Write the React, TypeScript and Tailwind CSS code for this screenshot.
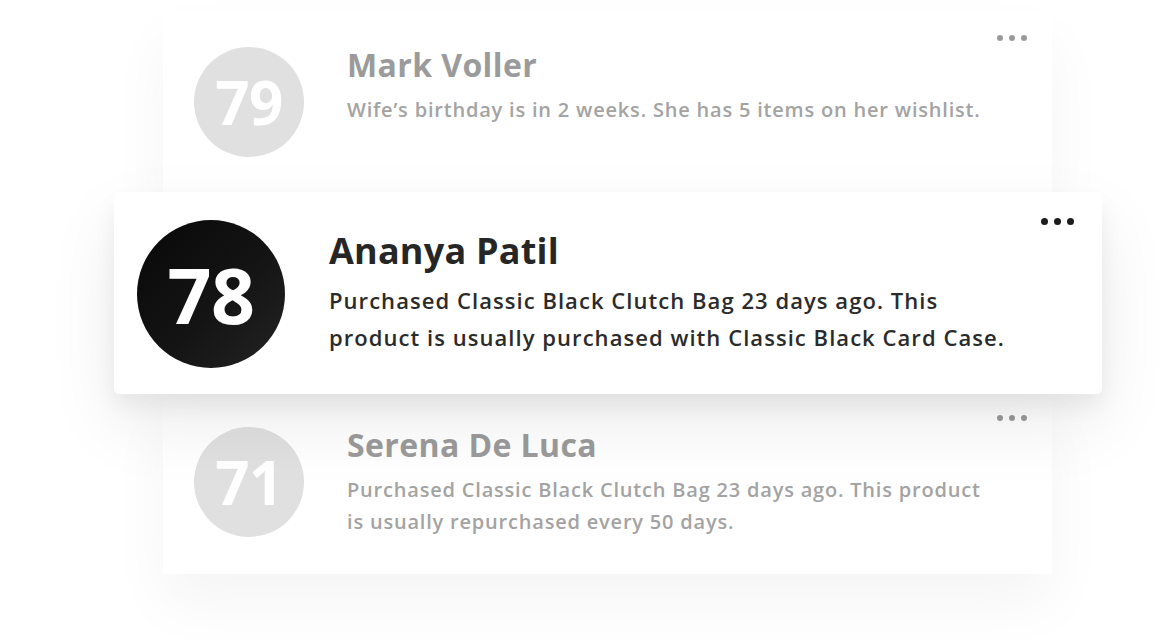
import React from "react";

const font = { fontFamily: '"Open Sans", "Liberation Sans", sans-serif' };

function Dots({ dark }: { dark?: boolean }) {
  return (
    <div className="flex gap-[6px]">
      {[0, 1, 2].map((i) => (
        <span
          key={i}
          className={
            dark
              ? "block h-[7px] w-[7px] rounded-full bg-[#1c1c1c]"
              : "block h-[6px] w-[6px] rounded-full bg-[#9a9a9a]"
          }
        />
      ))}
    </div>
  );
}

function FadedCard({
  num,
  name,
  lines,
  extra,
}: {
  num: string;
  name: string;
  lines: string[];
  extra: string;
}) {
  return (
    <div
      className={
        "relative ml-[163px] flex h-[184px] w-[889px] rounded-[3px] bg-white pl-[31px] pt-[37px] shadow-[0_30px_60px_rgba(0,0,0,0.045)] " +
        extra
      }
    >
      <div className="flex h-[110px] w-[110px] shrink-0 items-center justify-center rounded-full bg-[#e0e0e0]">
        <span className="text-[60px] font-bold leading-none tracking-[-0.5px] text-white">{num}</span>
      </div>
      <div className="ml-[43px] flex flex-col">
        <div className="-mt-[2px] h-[40px] text-[32px] font-bold leading-[40px] tracking-[0.4px] text-[#9b9b9b]">
          {name}
        </div>
        <div className="mt-[9px] flex flex-col">
          {lines.map((l) => (
            <div
              key={l}
              className="whitespace-nowrap text-[20px] font-semibold leading-[32px] tracking-[0.8px] text-[#a3a3a3]"
            >
              {l}
            </div>
          ))}
        </div>
      </div>
      <div className="absolute right-[25px] top-[25px]">
        <Dots />
      </div>
    </div>
  );
}

export default function App() {
  return (
    <div className="h-[640px] w-[1160px] overflow-hidden bg-white pt-[10px]" style={font}>
      <FadedCard
        num="79"
        name="Mark Voller"
        lines={["Wife’s birthday is in 2 weeks. She has 5 items on her wishlist."]}
        extra="z-0"
      />
      <div className="relative z-20 -mt-[2px] ml-[114px] flex h-[202px] w-[988px] rounded-[5px] bg-white pl-[23px] pt-[28px] shadow-[0_12px_22px_rgba(0,0,0,0.06),0_30px_70px_rgba(0,0,0,0.08)]">
        <div className="flex h-[148px] w-[148px] shrink-0 items-center justify-center rounded-full bg-[linear-gradient(135deg,#080808,#141414_55%,#232323)]">
          <span className="text-[77px] font-bold leading-none tracking-[-0.5px] text-white">78</span>
        </div>
        <div className="ml-[44px] flex flex-col">
          <div className="mt-[9px] h-[44px] text-[36px] font-bold leading-[44px] tracking-[0.2px] text-[#262626]">
            Ananya Patil
          </div>
          <div className="mt-[9px] flex flex-col">
            <div className="whitespace-nowrap text-[22px] font-semibold leading-[37px] tracking-[1.05px] text-[#2b2b2b]">
              Purchased Classic Black Clutch Bag 23 days ago. This
            </div>
            <div className="whitespace-nowrap text-[22px] font-semibold leading-[37px] tracking-[1.05px] text-[#2b2b2b]">
              product is usually purchased with Classic Black Card Case.
            </div>
          </div>
        </div>
        <div className="absolute right-[28px] top-[26px]">
          <Dots dark />
        </div>
      </div>
      <FadedCard
        num="71"
        name="Serena De Luca"
        lines={[
          "Purchased Classic Black Clutch Bag 23 days ago. This product",
          "is usually repurchased every 50 days.",
        ]}
        extra="z-10 -mt-[4px]"
      />
    </div>
  );
}
